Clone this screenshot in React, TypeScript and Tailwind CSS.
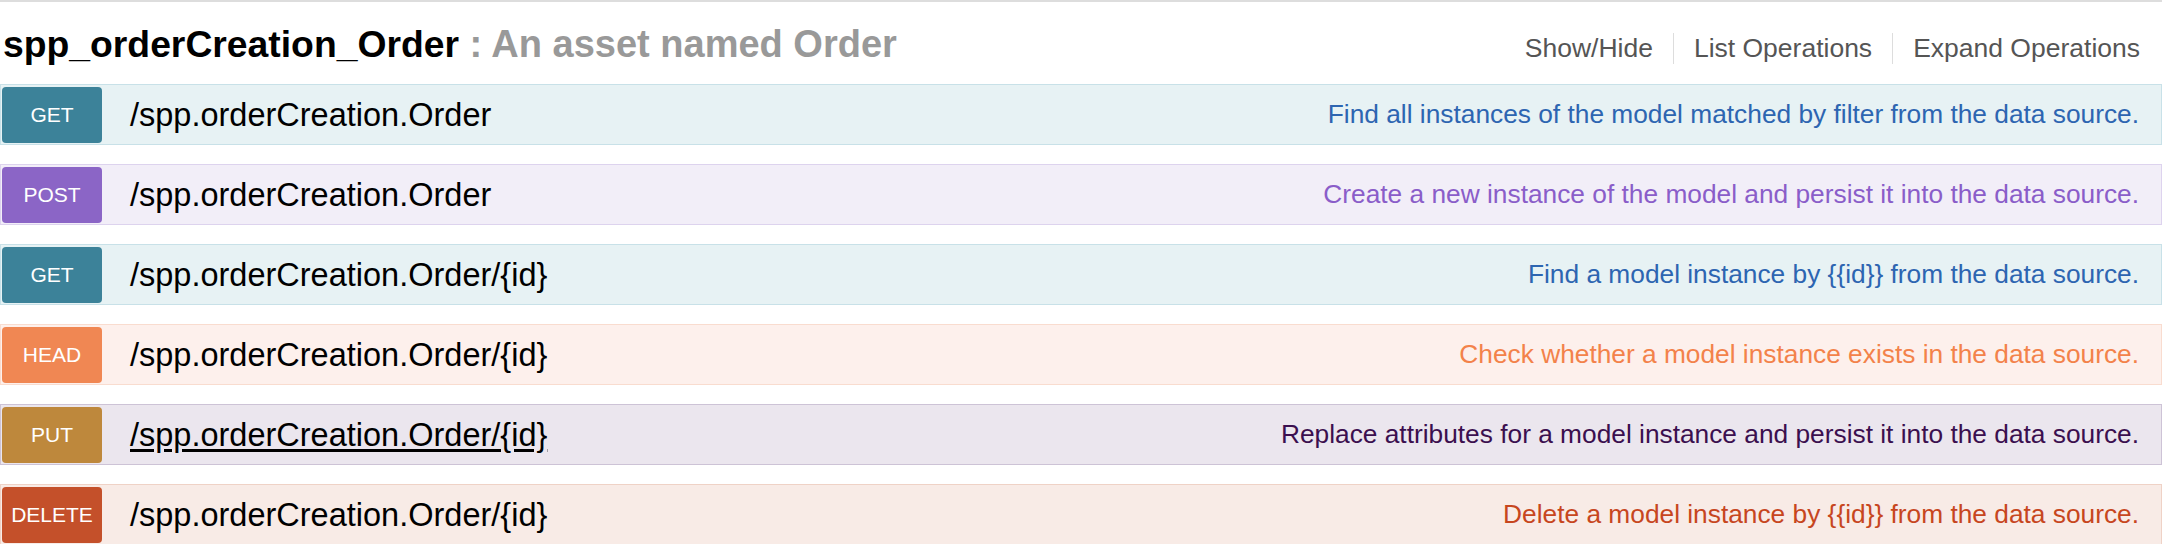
import React from "react";

type Op = {
  method: string;
  path: string;
  desc: string;
  badge: string;
  row: string;
  descColor: string;
  underline?: boolean;
};

const ops: Op[] = [
  {
    method: "GET",
    path: "/spp.orderCreation.Order",
    desc: "Find all instances of the model matched by filter from the data source.",
    badge: "bg-[#3c8299]",
    row: "bg-[#e7f2f4] border-[#c8e1e8]",
    descColor: "text-[#2d65b1]",
  },
  {
    method: "POST",
    path: "/spp.orderCreation.Order",
    desc: "Create a new instance of the model and persist it into the data source.",
    badge: "bg-[#8b65c6]",
    row: "bg-[#f2eef8] border-[#ddd3ee]",
    descColor: "text-[#8a5dc9]",
  },
  {
    method: "GET",
    path: "/spp.orderCreation.Order/{id}",
    desc: "Find a model instance by {{id}} from the data source.",
    badge: "bg-[#3c8299]",
    row: "bg-[#e7f2f4] border-[#c8e1e8]",
    descColor: "text-[#2d65b1]",
  },
  {
    method: "HEAD",
    path: "/spp.orderCreation.Order/{id}",
    desc: "Check whether a model instance exists in the data source.",
    badge: "bg-[#f08753]",
    row: "bg-[#fdf0ec] border-[#f9dccf]",
    descColor: "text-[#f3824a]",
  },
  {
    method: "PUT",
    path: "/spp.orderCreation.Order/{id}",
    desc: "Replace attributes for a model instance and persist it into the data source.",
    badge: "bg-[#be883c]",
    row: "bg-[#ebe6ee] border-[#cdc3d6]",
    descColor: "text-[#3b0f4f]",
    underline: true,
  },
  {
    method: "DELETE",
    path: "/spp.orderCreation.Order/{id}",
    desc: "Delete a model instance by {{id}} from the data source.",
    badge: "bg-[#c4502a]",
    row: "bg-[#f8ebe6] border-[#efd2c6]",
    descColor: "text-[#c7461e]",
  },
];

export default function App() {
  return (
    <div
      className="w-[2162px] h-[544px] bg-white border-t-2 border-[#dddddd] overflow-hidden"
      style={{ fontFamily: '"Liberation Sans", Arial, Helvetica, sans-serif' }}
    >
      <div className="flex items-baseline justify-between pt-[24px] pb-[20px] pl-[3px] pr-[22px]">
        <h2 className="text-[37.3px] leading-[37px] font-bold text-black">
          spp_orderCreation_Order
          <span className="text-[38px] text-[#999999]"> : An asset named Order</span>
        </h2>
        <ul className="flex items-baseline text-[26.5px] leading-[31px] text-[#555555]">
          <li className="pr-[20px]">Show/Hide</li>
          <li className="px-[20px] border-l border-[#dddddd]">List Operations</li>
          <li className="pl-[20px] border-l border-[#dddddd]">Expand Operations</li>
        </ul>
      </div>
      <div className="flex flex-col gap-[19px]">
        {ops.map((op, i) => (
          <div
            key={i}
            className={`flex items-center border pt-[2px] pb-[1px] px-[1px] ${op.row}`}
          >
            <div
              className={`w-[100px] h-[56px] rounded-[4px] flex items-center justify-center text-white text-[21px] ${op.badge}`}
            >
              {op.method}
            </div>
            <div
              className={`ml-[28px] text-[32.5px] text-black ${op.underline ? "underline underline-offset-[3px]" : ""}`}
            >
              {op.path}
            </div>
            <div className={`ml-auto pr-[21px] text-[26.3px] ${op.descColor}`}>{op.desc}</div>
          </div>
        ))}
      </div>
    </div>
  );
}
